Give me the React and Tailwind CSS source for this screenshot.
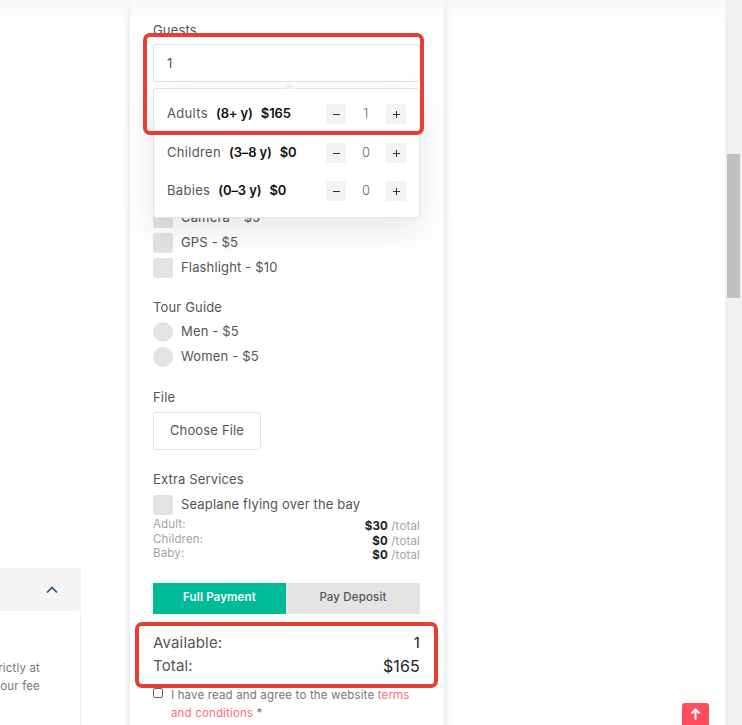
const Stepper = ({ value, tone }) => (
  <div className="flex items-center">
    <button className="w-5 h-5 rounded-[2px] bg-[#f4f4f4] flex items-center justify-center">
      <span className="w-[7px] h-px bg-[#333]"></span>
    </button>
    <span className={`w-10 text-center text-[13px] font-light ${tone}`}>{value}</span>
    <button className="w-5 h-5 rounded-[2px] bg-[#f4f4f4] flex items-center justify-center">
      <span className="relative w-[7px] h-px bg-[#333]">
        <span className="absolute left-[3px] -top-[3px] w-px h-[7px] bg-[#333]"></span>
      </span>
    </button>
  </div>
);

const GuestRow = ({ name, age, price, value, tone, className }) => (
  <div className={`flex items-center justify-between px-[13px] ${className}`}>
    <p className="text-[13px] text-[#555] whitespace-nowrap tracking-[0.025em]">
      {name}
      <b className="ml-[8px] font-semibold text-[#111] tracking-[-0.01em]">{age}</b>
      <b className="ml-[8px] font-semibold text-[#111] tracking-[-0.01em]">{price}</b>
    </p>
    <Stepper value={value} tone={tone} />
  </div>
);

const Check = ({ label, round }) => (
  <div className="h-[25px] flex items-start gap-2">
    <span className={`w-5 h-5 bg-[#e3e3e3] shrink-0 ${round ? "rounded-full" : "rounded-[3px]"}`}></span>
    <span className="text-[13px] leading-[18px] text-[#555] whitespace-nowrap">{label}</span>
  </div>
);

const PriceRow = ({ label, price }) => (
  <div className="flex justify-between text-[11.5px] leading-[14.5px]">
    <span className="text-[#a3a3a3] -mt-[2px]">{label}</span>
    <span className="text-[#a3a3a3]">
      <b className="font-bold text-[#222]">{price}</b> /total
    </span>
  </div>
);

export default function App() {
  return (
    <div
      className="w-[742px] h-[725px] overflow-hidden flex bg-white tracking-[0.01em]"
      style={{ fontFamily: "Inter, 'Noto Sans', sans-serif" }}
    >
      <div className="relative w-[725px] h-full overflow-hidden flex">
        {/* Left accordion, cut by the viewport */}
        <aside className="w-[81px] shrink-0 pt-[568px]">
          <div className="h-[43px] bg-[#f4f4f4] rounded-r-[4px] flex items-center justify-end pr-[23px]">
            <svg width="12" height="8" viewBox="0 0 12 8" fill="none" stroke="#33506e" strokeWidth="1.6">
              <path d="M1 6.5 L6 1.5 L11 6.5" />
            </svg>
          </div>
          <div className="h-[150px] bg-white border-r border-[#eeeeee] pt-[48px] pr-[40px] flex flex-col items-end text-[11.5px] leading-[18px] text-[#777] whitespace-nowrap overflow-hidden">
            <p>strictly at</p>
            <p>the tour fee</p>
          </div>
        </aside>

        {/* Booking card */}
        <main className="ml-[49px] w-[314px] h-[760px] shrink-0 bg-white pl-[23px] pr-[24px] pt-[21px] shadow-[0_0_8px_rgba(110,120,190,0.28)]">
          <label className="block text-[13px] leading-[18px] text-[#555]">Guests</label>

          <div className="relative mt-[5px]">
            <div className="h-[38px] rounded-[3px] border border-[#e3e3e3] pl-[13px] pt-[2px] flex items-center text-[13px] text-[#555]">
              1
            </div>

            <span className="absolute z-20 left-[130px] top-[39px] w-0 h-0 border-x-[6px] border-x-transparent border-b-[6px] border-b-[#eeeeee]"></span>

            <div className="absolute z-10 left-0 right-0 top-[44px] h-[130px] bg-white rounded-[3px] border border-[#e3e3e3] shadow-[0_12px_35px_rgba(0,0,0,0.10)]">
              <GuestRow name="Adults" age="(8+ y)" price="$165" value="1" tone="text-[#8a5a7a]" className="mt-[15px]" />
              <GuestRow name="Children" age="(3–8 y)" price="$0" value="0" tone="text-[#666]" className="mt-[19px]" />
              <GuestRow name="Babies" age="(0–3 y)" price="$0" value="0" tone="text-[#666]" className="mt-[18px]" />
            </div>
          </div>

          <div className="mt-[126px]">
            <Check label="Camera - $5" />
            <Check label="GPS - $5" />
            <Check label="Flashlight - $10" />
          </div>

          <label className="block mt-[15px] text-[13px] leading-[18px] text-[#555]">Tour Guide</label>
          <div className="mt-[6px]">
            <Check label="Men - $5" round />
            <Check label="Women - $5" round />
          </div>

          <label className="block mt-[16px] text-[13px] leading-[18px] text-[#555]">File</label>
          <button className="mt-[6px] block w-[108px] h-[38px] rounded-[3px] border border-[#e3e3e3] text-[13px] text-[#555]">
            Choose File
          </button>

          <label className="block mt-[20px] text-[13px] leading-[18px] text-[#555]">Extra Services</label>
          <div className="mt-[7px]">
            <Check label="Seaplane flying over the bay" />
          </div>
          <div className="-mt-px">
            <PriceRow label="Adult:" price="$30" />
            <PriceRow label="Children:" price="$0" />
            <PriceRow label="Baby:" price="$0" />
          </div>

          <div className="mt-[20px] flex h-[31px] text-[11.5px]">
            <button className="w-[133px] bg-[#00bb98] text-white font-semibold">Full Payment</button>
            <button className="flex-1 bg-[#e4e4e4] text-[#555] font-medium">Pay Deposit</button>
          </div>

          <div className="mt-[17px] flex justify-between text-[15px] leading-[24px] text-[#555]">
            <span>Available:</span>
            <span className="text-[#222]">1</span>
          </div>
          <div className="-mt-px flex justify-between text-[15px] leading-[24px] text-[#555]">
            <span>Total:</span>
            <span className="text-[#222] text-[16px]">$165</span>
          </div>

          <div className="mt-[8px] flex items-start gap-2 text-[11.5px] leading-[18px] text-[#777]">
            <span className="mt-[2px] w-[10px] h-[10px] shrink-0 rounded-[2px] border border-[#666] bg-white"></span>
            <p>
              I have read and agree to the website <span className="text-[#ff6b81]">terms and conditions</span> *
            </p>
          </div>
        </main>

        {/* Sticky header shadow */}
        <div className="absolute top-0 left-0 right-0 h-5 bg-gradient-to-b from-[#f7f7f7] to-transparent z-10"></div>

        {/* Red annotation boxes */}
        <div className="absolute z-30 left-[143px] top-[33px] w-[281px] h-[102px] rounded-[7px] border-4 border-[#e64034]"></div>
        <div className="absolute z-30 left-[135px] top-[622px] w-[303px] h-[66px] rounded-[7px] border-4 border-[#e64034]"></div>

        {/* Back to top */}
        <button className="absolute z-30 left-[682px] top-[703px] w-[27px] h-[27px] rounded-[3px] bg-[#ff4d5e] flex items-center justify-center pb-[6px]">
          <svg width="11" height="12" viewBox="0 0 11 12" fill="none" stroke="#ffffff" strokeWidth="2">
            <path d="M5.5 12 V1.5 M1.5 5.5 L5.5 1.5 L9.5 5.5" />
          </svg>
        </button>
      </div>

      {/* Browser scrollbar */}
      <div className="w-[17px] h-full bg-[#f1f1f1] pt-[154px] px-[2px] shrink-0">
        <div className="h-[144px] bg-[#c1c1c1]"></div>
      </div>
    </div>
  );
}
